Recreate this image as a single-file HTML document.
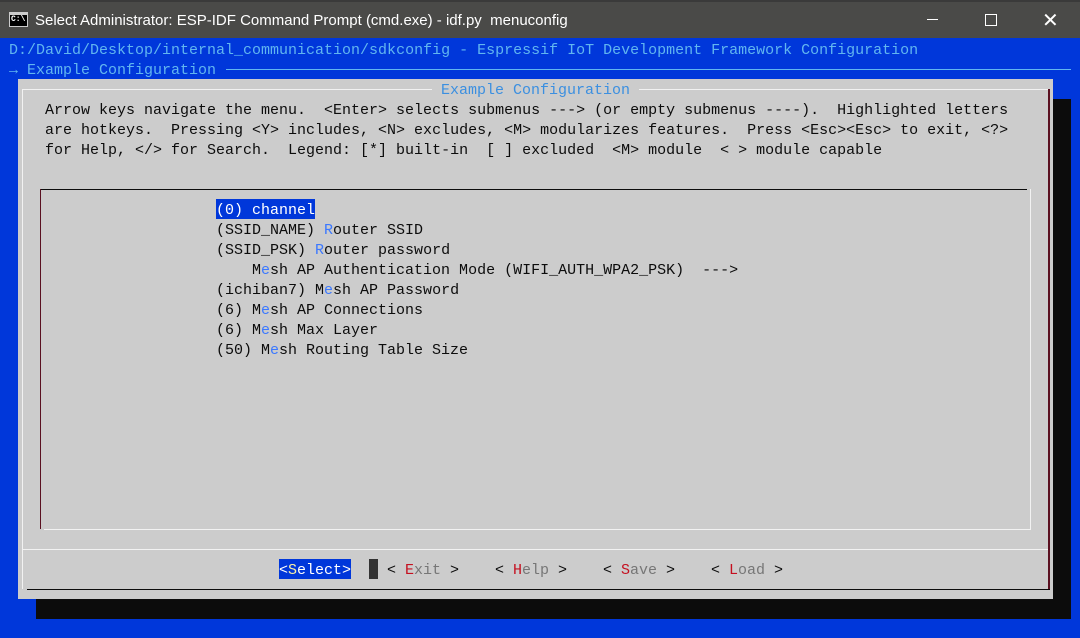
<!DOCTYPE html>
<html><head><meta charset="utf-8"><style>
*{margin:0;padding:0;box-sizing:border-box}
body{width:1080px;height:638px;overflow:hidden;background:#0037da;position:relative;font-family:"Liberation Mono",monospace;font-size:15px}
.tb{position:absolute;left:0;top:0;width:1080px;height:38px;background:#4a4a48;border-top:2px solid #3a3a3a;color:#fff;font-family:"Liberation Sans",sans-serif;font-size:15px}
.t{position:absolute;white-space:pre;line-height:20px;height:20px}
.t>i{font-style:normal;position:relative;top:2px}
.c{color:#61b6f0}
.k{color:#0c0c0c}
.h{color:#3b78ff}
.r{color:#c50f1f}
.g{color:#767676}
.a{position:absolute}
</style></head><body>
<div class="tb">
 <div class="a" style="left:9px;top:10px;width:19px;height:15px;border:1px solid #ccc;background:#000;border-top-width:3px"></div>
 <div class="a" style="left:11px;top:13px;font-size:8px;color:#fff;font-family:'Liberation Mono',monospace;font-weight:bold">C:\</div>
 <div class="a" style="left:35px;top:10px">Select Administrator: ESP-IDF Command Prompt (cmd.exe) - idf.py&nbsp; menuconfig</div>
 <div class="a" style="left:927px;top:17px;width:11px;height:1px;background:#fff"></div>
 <div class="a" style="left:985px;top:12px;width:12px;height:12px;border:1px solid #fff"></div>
 <div class="a" style="left:1042px;top:6px;color:#fff;font-size:20px;font-family:'DejaVu Sans',sans-serif;font-weight:200">✕</div>
</div>
<div class="t c" style="left:9px;top:39px"><i>D:/David/Desktop/internal_communication/sdkconfig - Espressif IoT Development Framework Configuration</i></div>
<div class="t c" style="left:9px;top:59px"><i>→ Example Configuration</i></div>
<div class="a" style="left:226px;top:69px;width:845px;height:1px;background:#61b6f0"></div>
<div class="a" style="left:36px;top:99px;width:1035px;height:520px;background:#0c0c0c"></div>
<div class="a" style="left:18px;top:79px;width:1035px;height:520px;background:#cccccc"></div>
<div class="a" style="left:22px;top:89px;width:1px;height:500px;background:#f2f2f2"></div>
<div class="a" style="left:22px;top:89px;width:1026px;height:1px;background:#f2f2f2"></div>
<div class="a" style="left:1048px;top:89px;width:2px;height:500px;background:#5a1020"></div>
<div class="a" style="left:27px;top:589px;width:1023px;height:1px;background:#0c0c0c"></div>
<div class="a" style="left:22px;top:549px;width:1026px;height:1px;background:#f2f2f2"></div>
<div class="t c" style="left:432px;top:79px;background:#cccccc;color:#3b8fe0;padding:0 9px"><i>Example Configuration</i></div>
<div class="t k" style="left:45px;top:99px"><i>Arrow keys navigate the menu.  &lt;Enter&gt; selects submenus ---&gt; (or empty submenus ----).  Highlighted letters</i></div>
<div class="t k" style="left:45px;top:119px"><i>are hotkeys.  Pressing &lt;Y&gt; includes, &lt;N&gt; excludes, &lt;M&gt; modularizes features.  Press &lt;Esc&gt;&lt;Esc&gt; to exit, &lt;?&gt;</i></div>
<div class="t k" style="left:45px;top:139px"><i>for Help, &lt;/&gt; for Search.  Legend: [*] built-in  [ ] excluded  &lt;M&gt; module  &lt; &gt; module capable</i></div>
<div class="a" style="left:40px;top:189px;width:987px;height:1px;background:#0c0c0c"></div>
<div class="a" style="left:40px;top:189px;width:1px;height:340px;background:#5a1020"></div>
<div class="a" style="left:1030px;top:189px;width:1px;height:340px;background:#f2f2f2"></div>
<div class="a" style="left:44px;top:529px;width:987px;height:1px;background:#f2f2f2"></div>
<div class="t" style="left:216px;top:199px;background:#0037da;color:#fff"><i>(0) channel</i></div>
<div class="t k" style="left:216px;top:219px"><i>(SSID_NAME) <span class="h">R</span>outer SSID</i></div>
<div class="t k" style="left:216px;top:239px"><i>(SSID_PSK) <span class="h">R</span>outer password</i></div>
<div class="t k" style="left:216px;top:259px"><i>    M<span class="h">e</span>sh AP Authentication Mode (WIFI_AUTH_WPA2_PSK)  ---&gt;</i></div>
<div class="t k" style="left:216px;top:279px"><i>(ichiban7) M<span class="h">e</span>sh AP Password</i></div>
<div class="t k" style="left:216px;top:299px"><i>(6) M<span class="h">e</span>sh AP Connections</i></div>
<div class="t k" style="left:216px;top:319px"><i>(6) M<span class="h">e</span>sh Max Layer</i></div>
<div class="t k" style="left:216px;top:339px"><i>(50) M<span class="h">e</span>sh Routing Table Size</i></div>
<div class="t" style="left:279px;top:559px;background:#0037da;color:#fff"><i>&lt;<span style="color:#f9f1a5">S</span>elect&gt;</i></div>
<div class="a" style="left:369px;top:559px;width:9px;height:20px;background:#333"></div>
<div class="t k" style="left:387px;top:559px"><i>&lt; <span class="r">E</span><span class="g">xit</span> &gt;</i></div>
<div class="t k" style="left:495px;top:559px"><i>&lt; <span class="r">H</span><span class="g">elp</span> &gt;</i></div>
<div class="t k" style="left:603px;top:559px"><i>&lt; <span class="r">S</span><span class="g">ave</span> &gt;</i></div>
<div class="t k" style="left:711px;top:559px"><i>&lt; <span class="r">L</span><span class="g">oad</span> &gt;</i></div>
</body></html>
